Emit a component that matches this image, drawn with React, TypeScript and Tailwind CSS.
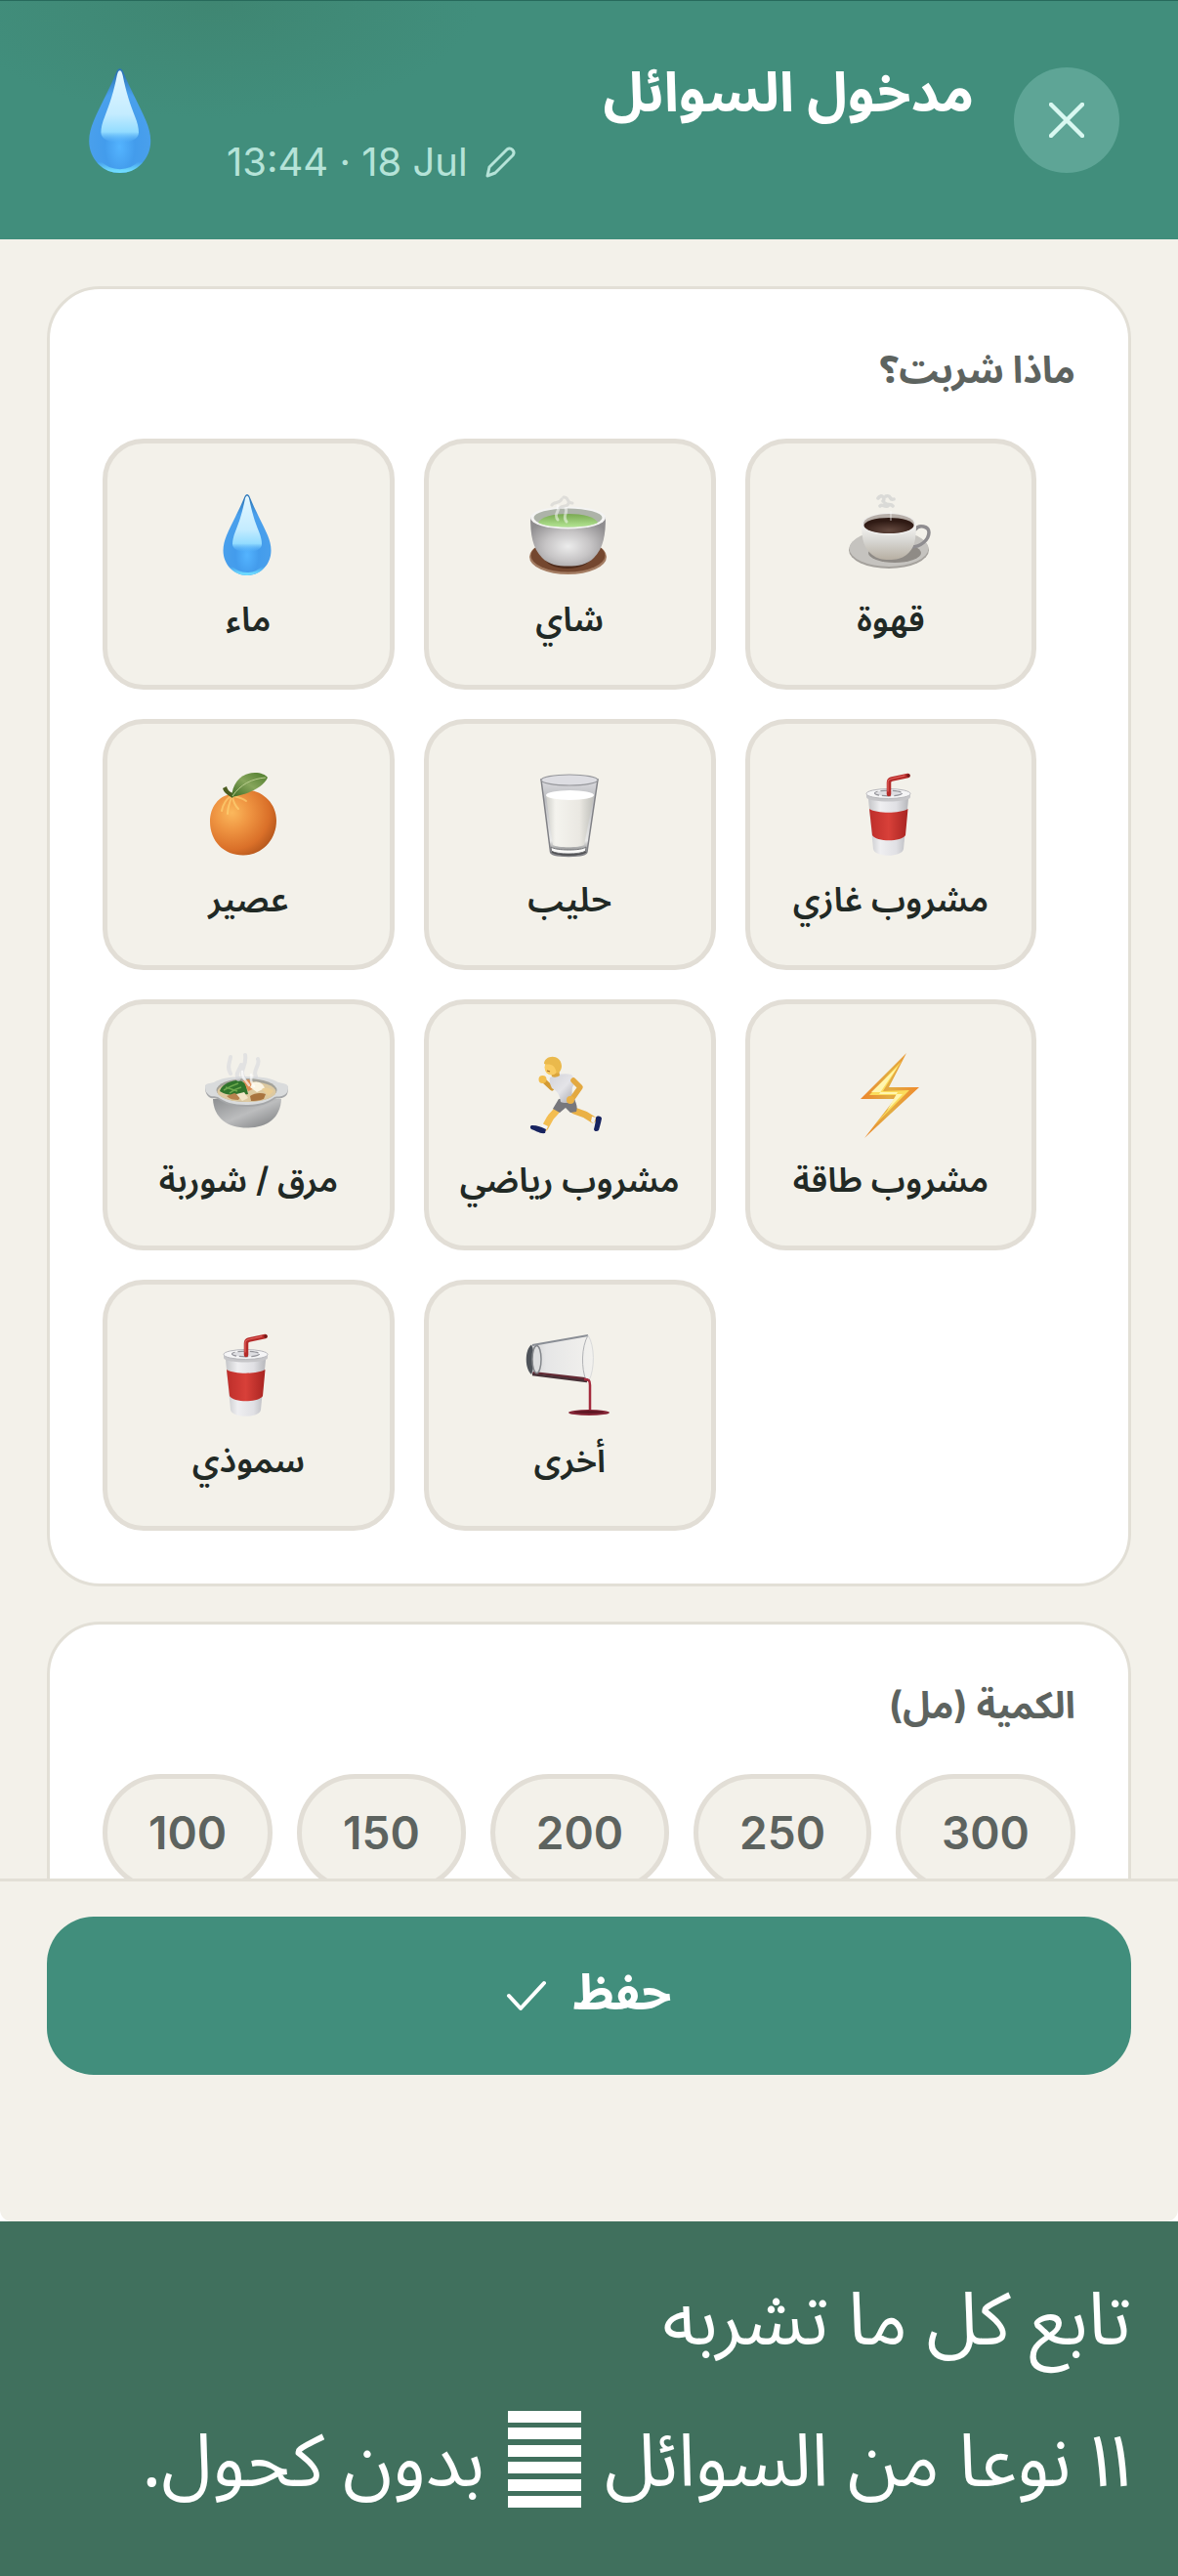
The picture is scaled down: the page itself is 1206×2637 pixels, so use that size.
import type { FC, ReactNode } from 'react'
import clsx from 'clsx'

interface Drink {
    name: string
    label: string
    icon: ReactNode
}

const Art: FC<{ className?: string, children: ReactNode }> = ({ className, children }) => (
    <svg viewBox="0 0 84 84" className={clsx('shrink-0 overflow-visible', className ?? 'h-[84px] w-[84px]')} aria-hidden="true">
        {children}
    </svg>
)

const Drop: FC<{ id: string, className?: string }> = ({ id, className }) => (
    <Art className={className}>
        <defs>
            <radialGradient id={`${id}-body`} cx="0.5" cy="0.75" r="0.7">
                <stop offset="0" stopColor="#54b4ff" />
                <stop offset="0.35" stopColor="#439cec" />
                <stop offset="0.75" stopColor="#4aa0ec" />
                <stop offset="1" stopColor="#2c76b8" />
            </radialGradient>
            <linearGradient id={`${id}-shine`} x1="0" y1="0" x2="0" y2="1">
                <stop offset="0" stopColor="#e4f7ff" />
                <stop offset="0.6" stopColor="#c4ecff" />
                <stop offset="0.85" stopColor="#93dcff" />
                <stop offset="1" stopColor="#5ab6fb" stopOpacity="0" />
            </linearGradient>
            <linearGradient id={`${id}-glow`} x1="0" y1="0" x2="0" y2="1">
                <stop offset="0.7" stopColor="#6fe0ff" stopOpacity="0" />
                <stop offset="1" stopColor="#6fdcff" />
            </linearGradient>
        </defs>
        <path d="M41 1c1 0 2 1 2.600 2.400C49 17 57 31 62 43c2 5 3.500 10 3.500 15.500C65.500 73 54.500 84 41 84S16.500 73 16.500 58.500C16.500 53 18 48 20 43c5-12 13-26 18.400-39.600C39 2 40 1 41 1z" fill={`url(#${id}-body)`} />
        <path d="M18 58c0 14 10 24.500 23 24.500S64 72 64 58" fill="none" stroke={`url(#${id}-glow)`} strokeWidth="3" />
        <path d="M41 2.500c1 0 1.800 1.500 2.300 4C46 20 49 29 53 39c2 5 3 9 3 13 0 5-6 8-15 8s-15-3-15-8c0-4 1-8 3-13 4-10 7-19 9.700-32.500C39.200 4 40 2.500 41 2.500z" fill={`url(#${id}-shine)`} />
    </Art>
)

const Tea = () => (
    <Art>
        <defs>
            <radialGradient id="tea-cup" cx="0.5" cy="0.6" r="0.6">
                <stop offset="0" stopColor="#ececec" />
                <stop offset="0.5" stopColor="#c6c4c5" />
                <stop offset="1" stopColor="#8f8d8f" />
            </radialGradient>
            <linearGradient id="tea-liquid" x1="0" y1="0" x2="0" y2="1">
                <stop offset="0" stopColor="#79a851" />
                <stop offset="1" stopColor="#b3e593" />
            </linearGradient>
        </defs>
        <ellipse cx="40.500" cy="65" rx="39.500" ry="18" fill="#a37c62" />
        <ellipse cx="40.500" cy="63.500" rx="38" ry="17" fill="#74472f" />
        <ellipse cx="40" cy="65" rx="24" ry="12" fill="#4e2c1c" />
        <path d="M2 24c0 18 2 32 12 42 7 7 16 8.500 26.500 8.500S60 73 67 66c10-10 12-24 12-42z" fill="url(#tea-cup)" />
        <ellipse cx="40.500" cy="25" rx="38.500" ry="11.500" fill="#f4f4f3" />
        <ellipse cx="40.500" cy="25" rx="35" ry="9.500" fill="#adb3a9" />
        <path d="M10 30c3-6 15-9 30.500-9S68 24 71 30c-5 3-16 4.500-30.500 4.500S15 33 10 30z" fill="url(#tea-liquid)" />
        <path d="M30 27c-5-7 3-8 0-14m9 16c-5-6 2-9-1-14" fill="none" stroke="#fff" strokeOpacity="0.5" strokeWidth="3" strokeLinecap="round" />
        <path d="M24 12c2-4 8-1 10-6m-2 9c4-4 8 0 9-5m-5-6c6-1 2 6 9 6" fill="none" stroke="#c9c9c7" strokeOpacity="0.5" strokeWidth="3" strokeLinecap="round" />
    </Art>
)

const Coffee = () => (
    <Art>
        <defs>
            <linearGradient id="coffee-cup" x1="0" y1="0" x2="0" y2="1">
                <stop offset="0" stopColor="#f8f7f5" />
                <stop offset="0.5" stopColor="#d6d5d1" />
                <stop offset="1" stopColor="#b7afa2" />
            </linearGradient>
            <radialGradient id="coffee-liquid" cx="0.5" cy="0.8" r="0.6">
                <stop offset="0" stopColor="#64493f" />
                <stop offset="1" stopColor="#2f1a14" />
            </radialGradient>
        </defs>
        <ellipse cx="40" cy="58" rx="41" ry="19" fill="#a5a29d" />
        <ellipse cx="40" cy="56.500" rx="40.500" ry="18.500" fill="#c5c3bf" />
        <ellipse cx="46" cy="61" rx="27" ry="10" fill="#8f8b86" />
        <path d="M67 37c4-6 14-3 14 3 0 8-9 15-18 15" fill="none" stroke="#8f8d90" strokeWidth="3.500" strokeLinecap="round" />
        <path d="M12 31c0 17 3 26 11 32 5 4 10 5 17 5s13-1 18-5c8-6 10-15 10-32z" fill="url(#coffee-cup)" />
        <ellipse cx="40" cy="31.500" rx="28" ry="11.500" fill="#eeedeb" />
        <ellipse cx="40" cy="31" rx="26" ry="10" fill="#b7afa9" />
        <ellipse cx="40" cy="33" rx="25.500" ry="8" fill="url(#coffee-liquid)" />
        <path d="M29 5c3-5 8 0 5 3m-3 5c3-3 5 3 9-1m-3-9c6-2 3 5 8 3m-9 4c2 3 6 0 8 3" fill="none" stroke="#cfd0cf" strokeOpacity="0.7" strokeWidth="3.500" strokeLinecap="round" />
        <path d="M42 18v10" stroke="#fff" strokeOpacity="0.35" strokeWidth="2" />
    </Art>
)

const Orange = () => (
    <Art>
        <defs>
            <radialGradient id="orange-body" cx="0.33" cy="0.35" r="0.75">
                <stop offset="0" stopColor="#fbb85c" />
                <stop offset="0.35" stopColor="#ef9542" />
                <stop offset="0.75" stopColor="#da7029" />
                <stop offset="1" stopColor="#b0541b" />
            </radialGradient>
            <linearGradient id="orange-leaf" x1="0" y1="1" x2="1" y2="0">
                <stop offset="0" stopColor="#3e6a22" />
                <stop offset="0.5" stopColor="#86a55b" />
                <stop offset="1" stopColor="#4c7a2b" />
            </linearGradient>
        </defs>
        <path d="M41 16.500C58 18 71 31 71 48c0 20-15 35.500-34 35.500C17 83.500 3 69 3 49 3 34 12 23 24 21c6-1 10-5 17-4.500z" fill="url(#orange-body)" />
        <path d="M24 23c-5 4-8 9-9 15m10-14c-2 6-4 11-4 17m5-17c1 5 2 8 6 12m-5-13c4 1 9 2 13 5" fill="none" stroke="#ffd97a" strokeOpacity="0.6" strokeWidth="2" strokeLinecap="round" />
        <path d="M16 15c1 4 4 6 7 8l3 2 2-5c-4 0-7-3-8-7z" fill="#4b5c20" />
        <path d="M25 24C26 10 34-1 49-1c6 0 11 2 13 5-5 11-21 17-37 20z" fill="url(#orange-leaf)" />
        <path d="M26 23C34 11 46 5 60 4" fill="none" stroke="#b9cd8e" strokeWidth="1" />
    </Art>
)

const Milk = () => (
    <Art>
        <defs>
            <linearGradient id="milk-body" x1="0" y1="0" x2="1" y2="0">
                <stop offset="0" stopColor="#cfcfca" />
                <stop offset="0.2" stopColor="#f4f3ee" />
                <stop offset="0.7" stopColor="#eae8e2" />
                <stop offset="1" stopColor="#bfbfba" />
            </linearGradient>
            <linearGradient id="milk-glass" x1="0" y1="0" x2="0" y2="1">
                <stop offset="0" stopColor="#dcdce0" />
                <stop offset="0.25" stopColor="#bcbdc0" />
                <stop offset="0.8" stopColor="#e9e9e8" />
                <stop offset="1" stopColor="#5f6063" />
            </linearGradient>
        </defs>
        <path d="M13 6l9.500 74c.5 6 37 6 37.500 0l11-74z" fill="url(#milk-glass)" stroke="#808186" strokeWidth="1.500" />
        <path d="M18 22l7 51c5 3 27 3 32 0l10-51z" fill="url(#milk-body)" />
        <ellipse cx="42.500" cy="22" rx="24.500" ry="5" fill="#fff" />
        <ellipse cx="42" cy="6.500" rx="29" ry="5.500" fill="#dddde2" stroke="#97989c" strokeWidth="1.200" />
        <path d="M23 75c5 4 32 4 36 0l-.500 4c-5 4-30 4-35 0z" fill="#f8f8f7" stroke="#77787b" strokeWidth="1" />
        <path d="M24 80c6 4 29 4 35 0" fill="none" stroke="#4c4d50" strokeWidth="1.500" />
    </Art>
)

const Soda: FC<{ id: string }> = ({ id }) => (
    <Art>
        <defs>
            <linearGradient id={`${id}-cup`} x1="0" y1="0" x2="1" y2="0">
                <stop offset="0" stopColor="#c4c5c8" />
                <stop offset="0.3" stopColor="#efeff1" />
                <stop offset="0.7" stopColor="#e0e0e4" />
                <stop offset="1" stopColor="#b6b7bb" />
            </linearGradient>
            <linearGradient id={`${id}-band`} x1="0" y1="0" x2="1" y2="0">
                <stop offset="0" stopColor="#bd2e2a" />
                <stop offset="0.5" stopColor="#d84039" />
                <stop offset="1" stopColor="#a82421" />
            </linearGradient>
        </defs>
        <path d="M19 26l5 51c1 9 30 9 31 0l5-51z" fill={`url(#${id}-cup)`} />
        <path d="M20 36c8 5 31 5 39.500 0L57 63c-4 7-30 7-34 0z" fill={`url(#${id}-band)`} />
        <path d="M17 21c0-7 45-7 45 0v3c0 6-45 6-45 0z" fill="#c6c6c9" />
        <ellipse cx="39.500" cy="20.500" rx="22.500" ry="5" fill="#f5f5f6" stroke="#b8b8bc" strokeWidth="1" />
        <ellipse cx="39.500" cy="20" rx="14" ry="2.800" fill="#dedee2" stroke="#94949a" strokeWidth="1.200" strokeDasharray="9 3" />
        <path d="M40 21V9c0-2 1-3 3-3.500L59.500 2" fill="none" stroke="#b52b29" strokeWidth="4.500" strokeLinecap="round" strokeLinejoin="round" />
        <path d="M39 18V8.500c0-2 2-3 4-3.500L56 2.200" fill="none" stroke="#e0605c" strokeWidth="1.200" strokeLinecap="round" />
        <circle cx="60" cy="2" r="1.700" fill="#701c1b" />
    </Art>
)

const Soup = () => (
    <Art>
        <defs>
            <linearGradient id="soup-bowl" x1="0" y1="0" x2="1" y2="1">
                <stop offset="0" stopColor="#8d8f91" />
                <stop offset="0.5" stopColor="#bcbdbe" />
                <stop offset="1" stopColor="#77797b" />
            </linearGradient>
        </defs>
        <path d="M6 46c1 20 15 29.500 35 29.500S75 66 76 46z" fill="url(#soup-bowl)" />
        <path d="M-2 34c0-3 5-3 9-4 6-4 17-6 33-6s27 2 33 6c4 1 10 1 10 5 0 6-2 8-4 9-3 2-7 1-10 2-7 5-15 8-29 8s-22-3-29-8c-3-1-7 0-9-2s-4-4-4-10z" fill="#a5a7a9" />
        <path d="M-2 33c0-3 5-3 9-4 6-4 17-6 33-6s27 2 33 6c4 1 10 1 10 5 0 5-2 7-4 8-3 2-7 1-10 2-7 5-15 8-29 8s-22-3-29-8c-3-1-7 0-9-2s-4-3-4-9z" fill="#d9dbdc" />
        <ellipse cx="40.500" cy="37" rx="31" ry="12" fill="#a3a29a" />
        <ellipse cx="40.500" cy="38.500" rx="30" ry="10.500" fill="#ddc9a0" />
        <path d="M13 38c1-5 8-10 17-11 6 0 10 3 10 6l2 8c-8 2-22 2-29-3z" fill="#31742c" />
        <path d="M17 37c5-3 9-5 15-7m-9 10c4-3 8-5 12-6m-16 0l12 4" stroke="#6ca84d" strokeWidth="1.500" fill="none" />
        <path d="M37 27l6-1 6 9-7 3z" fill="#dd8b52" />
        <path d="M47 29c6-2 11 2 12 6l-8 4-7-5z" fill="#fbf4e2" />
        <path d="M20 43l8-3 7 3-3 4c-5 0-9-1-12-4z" fill="#b7824d" />
        <path d="M30 41l8-2 4 6-6 3z" fill="#f1e4c8" />
        <path d="M44 43c4-3 11-4 16-2l-2 5c-5 2-10 2-13 2z" fill="#a9743f" />
        <path d="M56 36c4-3 9-1 12 2l-5 5z" fill="#e9cd96" />
        <path d="M24 20c-4-6-1-11 0-17m14 22c-6-9 3-12 1-24m11 22c-4-7 5-11 2-18m-17 6c-3 7-6 9-3 15" fill="none" stroke="#d4d5da" strokeOpacity="0.55" strokeWidth="4" strokeLinecap="round" />
        <path d="M43 32c-5-7-7-7-7-14m12 15c-6-6-1-8-3-12" fill="none" stroke="#fff" strokeOpacity="0.65" strokeWidth="2.500" strokeLinecap="round" />
    </Art>
)

const Runner = () => (
    <Art>
        <defs>
            <linearGradient id="runner-shirt" x1="0" y1="0" x2="1" y2="1">
                <stop offset="0" stopColor="#d3d3d8" />
                <stop offset="0.5" stopColor="#e4e4e8" />
                <stop offset="1" stopColor="#a2a2a9" />
            </linearGradient>
        </defs>
        <path d="M24 35L16.500 28" stroke="#d39a32" strokeWidth="5" strokeLinecap="round" />
        <circle cx="14.500" cy="26" r="4" fill="#f2bd4c" />
        <path d="M47 58l11 4 8 5" stroke="#eab146" strokeWidth="7" strokeLinecap="round" strokeLinejoin="round" fill="none" />
        <path d="M65 64l4 1-2 6-3-2z" fill="#f4f4f6" />
        <path d="M69 65c2-3 6-1 6 1-1 5-2 8-3 12-2 2-5 1-5-1 1-4 2-8 2-12z" fill="#17235f" />
        <path d="M32 53c-3 7-8 9-10 13l-5 9" stroke="#f3bd51" strokeWidth="7" strokeLinecap="round" strokeLinejoin="round" fill="none" />
        <path d="M14 71l6 3-2 4-5-2z" fill="#f4f4f6" />
        <path d="M18 77l-1 4c-5 1-10-3-14-4-2-2-1-4 1-4 5 0 10 2 14 4z" fill="#17235f" />
        <path d="M31 46l16-1c1 5 4 8 2 14l-6 1-5-5-6 5-7-4z" fill="#77777c" />
        <path d="M22 24c6-3 15-5 22-3l5 6-4 7c-1 6 0 11 2 14-4 2-10 3-14 1-1-7-3-11-9-14-2-4-3-8-2-11z" fill="url(#runner-shirt)" />
        <path d="M46 27l7 7-7 10" stroke="#e3a941" strokeWidth="5.500" strokeLinecap="round" strokeLinejoin="round" fill="none" />
        <circle cx="43" cy="47" r="4" fill="#eab146" />
        <path d="M22 15h9l1 7c-3 2-6 2-8 1z" fill="#dba53d" />
        <ellipse cx="23.500" cy="13.500" rx="7" ry="8" fill="#f9cb61" />
        <path d="M16 10c0-9 17-11 18 2 0 4-2 7-5 8-1-4-2-8-6-9-2-1-5 0-7-1z" fill="#eab94c" />
        <path d="M19 17l3 1" stroke="#a86c25" strokeWidth="1.200" />
    </Art>
)

const Bolt = () => (
    <Art>
        <defs>
            <linearGradient id="bolt-edge" x1="0" y1="0" x2="1" y2="0">
                <stop offset="0" stopColor="#ec842b" />
                <stop offset="0.5" stopColor="#e2ad43" />
                <stop offset="1" stopColor="#ef8a2c" />
            </linearGradient>
        </defs>
        <path d="M58-1L40 34h31L15 86l31-40H11z" fill="url(#bolt-edge)" />
        <path d="M53 7L34 38l27-1L25 73l27-31H20z" fill="#fbdc5c" />
        <path d="M49 13L30 41h24L38 58l11-19H22z" fill="#fff6b0" />
    </Art>
)

const Pour = () => (
    <Art>
        <defs>
            <linearGradient id="pour-glass" x1="0" y1="0" x2="1" y2="0">
                <stop offset="0" stopColor="#c9cacc" />
                <stop offset="0.3" stopColor="#e6e6e6" />
                <stop offset="1" stopColor="#f2f1ee" />
            </linearGradient>
        </defs>
        <path d="M4 11L61 1c6 8 7 32 1 46L4 40C-4 34-4 16 4 11z" fill="url(#pour-glass)" />
        <path d="M5 38l53 6 4 4-58-8z" fill="#642a34" />
        <path d="M4 11L61 1" stroke="#8a8e95" strokeWidth="1.800" />
        <path d="M4 41l56 7" stroke="#473036" strokeWidth="2.500" />
        <path d="M3 10.500C-4 16-4 35 3 41c3-6 4-24 0-30.500z" fill="#4e5359" />
        <ellipse cx="8.500" cy="25.500" rx="4.500" ry="14" fill="#dddedf" stroke="#85888c" strokeWidth="1.500" />
        <path d="M61 1c-7 12-7 34-2 46" fill="none" stroke="#b1b2b5" strokeWidth="1" />
        <path d="M61 1c7 10 7 35 1 46" fill="none" stroke="#d9dadb" strokeWidth="1" />
        <path d="M57 46c5 0 6 1 6 6v28" fill="none" stroke="#a42b3d" strokeWidth="2.500" />
        <ellipse cx="62" cy="80" rx="21" ry="3" fill="#842536" />
        <ellipse cx="62" cy="79.500" rx="15" ry="1.500" fill="#5e1824" />
    </Art>
)

const drinks: Drink[] = [
    { name: 'water', label: 'ماء', icon: <Drop id="water" /> },
    { name: 'tea', label: 'شاي', icon: <Tea /> },
    { name: 'coffee', label: 'قهوة', icon: <Coffee /> },
    { name: 'juice', label: 'عصير', icon: <Orange /> },
    { name: 'milk', label: 'حليب', icon: <Milk /> },
    { name: 'soda', label: 'مشروب غازي', icon: <Soda id="soda" /> },
    { name: 'soup', label: 'مرق / شوربة', icon: <Soup /> },
    { name: 'sport', label: 'مشروب رياضي', icon: <Runner /> },
    { name: 'energy', label: 'مشروب طاقة', icon: <Bolt /> },
    { name: 'smoothie', label: 'سموذي', icon: <Soda id="smoothie" /> },
    { name: 'other', label: 'أخرى', icon: <Pour /> }
]

const amounts = [100, 150, 200, 250, 300]

const Card: FC<{ title: string, children: ReactNode }> = ({ title, children }) => (
    <section className="rounded-[54px] border-3 border-[#e2dfd6] bg-white px-[54px] pt-[52px] pb-[54px]">
        <h2 dir="rtl" className="text-[38px] leading-[60px] font-bold text-[#5d635f]">{title}</h2>
        {children}
    </section>
)

const App = () => {
    return (
        <div className="flex h-screen flex-col bg-[#f3f1ea] font-['Inter','Noto_Sans_Arabic','DejaVu_Sans',sans-serif]">
            <header className="flex items-center border-t border-[#27695b] bg-[#418e7c] bg-[radial-gradient(ellipse_270px_120px_at_220px_0px,#3f8672,#418e7c)] py-[35px] pr-[60px] pl-[70px]">
                <Drop id="header" className="h-[108px] w-[108px]" />
                <div className="ml-[54px] flex h-[174px] flex-1 flex-col">
                    <h1 dir="rtl" className="mt-[22px] text-[56px] leading-[72px] font-bold text-white">مدخول السوائل</h1>
                    <button type="button" className="mt-2 flex items-center gap-[18px] self-start text-[40px] leading-[56px] text-[#b5e3d8]">
                        13:44 · 18 Jul
                        <svg viewBox="0 0 32 32" className="h-8 w-8" fill="none" stroke="currentColor" strokeWidth="3" strokeLinejoin="round" aria-hidden="true">
                            <path d="M2 30l2-9L22 3c4-3 9 2 6 6L10 27z" />
                        </svg>
                    </button>
                </div>
                <button type="button" aria-label="إغلاق" className="ml-[41px] flex h-[108px] w-[108px] items-center justify-center rounded-full bg-[#5ea596] text-[#d9f8f1]">
                    <svg viewBox="0 0 36 36" className="h-9 w-9" fill="none" stroke="currentColor" strokeWidth="4.500" strokeLinecap="round" aria-hidden="true">
                        <path d="M2 2l32 32M34 2L2 34" />
                    </svg>
                </button>
            </header>

            <main className="flex min-h-0 flex-1 flex-col gap-9 overflow-hidden px-12 pt-12">
                <Card title="ماذا شربت؟">
                    <div className="mt-[41px] flex flex-wrap gap-[30px]">
                        {
                            drinks.map((drink) => (
                                <button key={drink.name} type="button" className="flex h-[257px] w-[30%] flex-col items-center rounded-[42px] border-5 border-[#e2ded6] bg-[#f3f1ea] pt-[51px]">
                                    {drink.icon}
                                    <span dir="rtl" className="mt-[17px] text-[35px] leading-[54px] font-semibold text-[#212925]">{drink.label}</span>
                                </button>
                            ))
                        }
                    </div>
                </Card>

                <Card title="الكمية (مل)">
                    <div className="mt-[41px] flex justify-between">
                        {
                            amounts.map((amount) => (
                                <button key={amount} type="button" className="h-[120px] rounded-full border-5 border-[#e2ded6] bg-[#f3f1ea] px-[42px] text-[46px] font-semibold text-[#5d635f]">
                                    {amount}
                                </button>
                            ))
                        }
                    </div>
                </Card>
            </main>

            <footer className="bg-white">
                <div className="rounded-b-xl border-t-3 border-[#e2dfd6] bg-[#f3f1ea] px-12 pt-9 pb-[150px]">
                    <button type="button" dir="rtl" className="flex h-[162px] w-full items-center justify-center gap-7 rounded-[48px] bg-[#418e7c] text-[50px] font-bold text-white">
                        <span className="mb-2">حفظ</span>
                        <svg viewBox="0 0 40 30" className="h-[30px] w-[40px] overflow-visible" fill="none" stroke="currentColor" strokeWidth="4" strokeLinecap="round" strokeLinejoin="round" aria-hidden="true">
                            <path d="M2 15l12 13L38 2" />
                        </svg>
                    </button>
                </div>
            </footer>

            <div dir="rtl" className="bg-[#40705d] px-12 pt-[30px] pb-[43px] font-['Noto_Sans_Arabic','DejaVu_Sans',sans-serif] text-[75px] leading-[145px] text-white proportional-nums">
                <p>تابع كل ما تشربه</p>
                <p className="flex items-center gap-6">
                    <span>١١ نوعا من السوائل</span>
                    <svg viewBox="0 0 75 99" className="mb-2 h-[99px] w-[75px]" fill="currentColor" aria-hidden="true">
                        <path d="M0 0h75v12H0zM0 17h75v12H0zM0 35h75v12H0zM0 52h75v12H0zM0 70h75v12H0zM0 87h75v12H0z" />
                    </svg>
                    <span>بدون كحول.</span>
                </p>
            </div>
        </div>
    )
}

export default App
